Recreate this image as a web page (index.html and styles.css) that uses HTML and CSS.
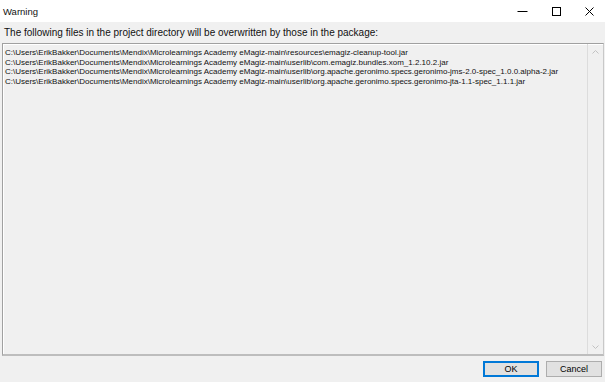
FILE: index.html
```html
<!DOCTYPE html>
<html>
<head>
<meta charset="utf-8">
<link rel="stylesheet" href="styles.css">
</head>
<body>
<div class="window">
  <div class="titlebar">
    <span class="title">Warning</span>
    <div class="controls">
      <span class="ctl"><svg width="11" height="11" viewBox="0 0 11 11"><line x1="0.5" y1="5.5" x2="10.5" y2="5.5" stroke="#000" stroke-width="1"/></svg></span>
      <span class="ctl"><svg width="9" height="9" viewBox="0 0 9 9"><rect x="0.5" y="0.5" width="8" height="8" fill="none" stroke="#000" stroke-width="1"/></svg></span>
      <span class="ctl ctl-close"><svg width="9" height="9" viewBox="0 0 9 9"><path d="M0.5 0.5 L8.5 8.5 M8.5 0.5 L0.5 8.5" stroke="#000" stroke-width="1"/></svg></span>
    </div>
  </div>
  <div class="body">
    <div class="label">The following files in the project directory will be overwritten by those in the package:</div>
    <div class="listbox">
      <div class="lines">
        <div>C:\Users\ErikBakker\Documents\Mendix\Microlearnings Academy eMagiz-main\resources\emagiz-cleanup-tool.jar</div>
        <div>C:\Users\ErikBakker\Documents\Mendix\Microlearnings Academy eMagiz-main\userlib\com.emagiz.bundles.xom_1.2.10.2.jar</div>
        <div>C:\Users\ErikBakker\Documents\Mendix\Microlearnings Academy eMagiz-main\userlib\org.apache.geronimo.specs.geronimo-jms-2.0-spec_1.0.0.alpha-2.jar</div>
        <div>C:\Users\ErikBakker\Documents\Mendix\Microlearnings Academy eMagiz-main\userlib\org.apache.geronimo.specs.geronimo-jta-1.1-spec_1.1.1.jar</div>
      </div>
      <div class="scrollbar">
        <svg class="arrow" width="7" height="4" viewBox="0 0 7 4"><path d="M0.5 3.5 L3.5 0.5 L6.5 3.5" fill="none" stroke="#c2c2c2" stroke-width="1"/></svg>
        <svg class="arrow" width="7" height="4" viewBox="0 0 7 4"><path d="M0.5 0.5 L3.5 3.5 L6.5 0.5" fill="none" stroke="#c2c2c2" stroke-width="1"/></svg>
      </div>
    </div>
    <div class="footer">
      <button class="btn btn-default">OK</button>
      <button class="btn">Cancel</button>
    </div>
  </div>
</div>
</body>
</html>
```
FILE: styles.css
```css
html, body {
  margin: 0;
  padding: 0;
}
body {
  width: 605px;
  height: 382px;
  background: #f0f0f0;
  font-family: "Liberation Sans", Arial, sans-serif;
  color: #000;
  overflow: hidden;
}
.window {
  display: flex;
  flex-direction: column;
  height: 382px;
}
.titlebar {
  height: 22px;
  background: #fff;
  display: flex;
  align-items: center;
  justify-content: space-between;
}
.title {
  font-size: 9.5px;
  padding-left: 3px;
  color: #111;
}
.controls {
  display: flex;
  height: 22px;
  align-items: center;
}
.ctl {
  width: 34px;
  height: 22px;
  display: flex;
  align-items: center;
  justify-content: center;
}
.ctl-close {
  width: 32px;
}
.body {
  flex: 1;
  display: flex;
  flex-direction: column;
  padding: 0 1px 5px 2px;
}
.label {
  font-size: 10px;
  line-height: 11px;
  padding: 5px 0 0 2px;
  height: 16px;
  color: #111;
}
.listbox {
  flex: 1;
  display: flex;
  background: #f0f0f0;
  border-top: 1px solid #a0a0a0;
  border-left: 1px solid #a0a0a0;
  border-right: 1px solid #c8c8c8;
  border-bottom: 2px solid #bdbdbd;
  box-shadow: inset 1px 1px 0 #fff;
}
.lines {
  flex: 1;
  font-size: 8px;
  line-height: 9.5px;
  padding: 4px 0 0 2px;
  white-space: nowrap;
  overflow: hidden;
  color: #111;
}
.scrollbar {
  width: 15px;
  border-left: 1px solid #dcdcdc;
  display: flex;
  flex-direction: column;
  justify-content: space-between;
  align-items: center;
  padding: 6px 0 5px;
}
.footer {
  height: 21px;
  display: flex;
  justify-content: flex-end;
  align-items: flex-end;
  gap: 7px;
  padding-right: 2px;
}
.btn {
  width: 56px;
  height: 16px;
  padding: 0;
  margin: 0;
  font-family: "Liberation Sans", Arial, sans-serif;
  font-size: 9px;
  line-height: 12px;
  color: #000;
  background: #e1e1e1;
  border: 1px solid #adadad;
  border-radius: 0;
}
.btn-default {
  border: 2px solid #0078d7;
}
```
